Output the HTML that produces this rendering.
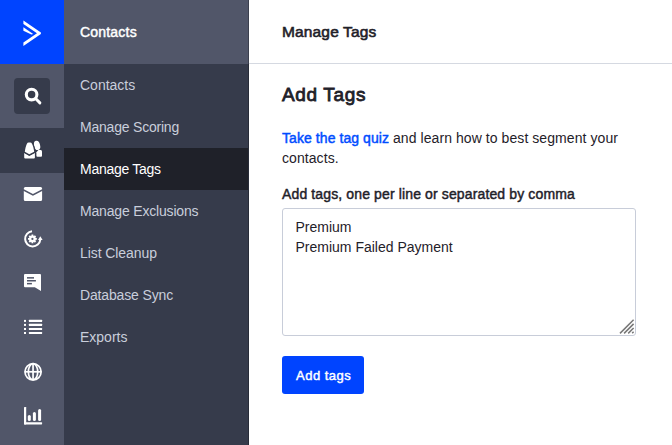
<!DOCTYPE html>
<html><head><meta charset="utf-8">
<style>
*{box-sizing:border-box;margin:0;padding:0}
html,body{width:672px;height:445px;overflow:hidden;background:#fff;font-family:"Liberation Sans",sans-serif}
.abs{position:absolute}
#rail{left:0;top:0;width:64px;height:445px;background:#515669}
#logo{left:0;top:0;width:64px;height:64px;background:#0044ff}
#search{left:14px;top:78px;width:36px;height:36px;background:#363b4b;border-radius:4px}
#railact{left:0;top:128px;width:64px;height:45px;background:#363b4b}
#sub{left:64px;top:0;width:185px;height:445px;background:#363b4b}
#subhead{left:64px;top:0;width:185px;height:64px;background:#515669}
#subedge{left:248px;top:0;width:1px;height:445px;background:rgba(0,0,0,0.25);z-index:5}
#subact{left:64px;top:148px;width:184px;height:42px;background:#1f2129}
.subt{position:absolute;left:80px;font-size:14px;color:#c9cedb;white-space:nowrap;line-height:16px}
#subtitle{left:80px;top:24px;font-size:14px;letter-spacing:0.2px;-webkit-text-stroke:0.45px #fff;color:#fff;white-space:nowrap;line-height:16px}
#mainhead{left:249px;top:0;width:423px;height:64px;border-bottom:1px solid #d5d9e1}
.dark{color:#1f2129}
svg{position:absolute;overflow:visible}
</style></head><body>
<div id="rail" class="abs"></div>
<div id="logo" class="abs"></div>
<svg style="left:0;top:0" width="64" height="64" viewBox="0 0 64 64">
  <polygon fill="#fff" points="23.4,20.4 40.9,32.5 40.9,34 23.4,45.9 23.4,42.5 37,33.25 23.4,24"/>
  <polygon fill="#fff" points="23.4,27.2 33.2,33.9 31.4,34.4 23.4,30.8"/>
</svg>
<div id="search" class="abs"></div>
<svg style="left:0;top:64px" width="64" height="64" viewBox="0 64 64 64">
  <circle cx="31.6" cy="94.6" r="5.3" fill="none" stroke="#fff" stroke-width="3.1"/>
  <line x1="35.8" y1="98.8" x2="39.9" y2="102.9" stroke="#fff" stroke-width="2.9" stroke-linecap="round"/>
</svg>
<div id="railact" class="abs"></div>
<!-- people -->
<svg style="left:0;top:128px" width="64" height="44" viewBox="0 128 64 44">
  <path fill="#fff" d="M36.4,152.2 L38.4,149.9 L40.8,149.9 Q42,150.2 42,151.5 L42,155.8 Q42,156.8 41,156.8 L37.4,156.8 Q36.4,156.8 36.4,155.8 Z"/>
  <ellipse cx="37.1" cy="145.4" rx="3" ry="4.7" transform="rotate(-14 37.1 145.4)" fill="#fff"/>
  <path fill="#fff" d="M24.2,153 L29.3,155.9 L34.9,153 L34.9,157.6 Q34.9,158.6 33.9,158.6 L25.2,158.6 Q24.2,158.6 24.2,157.6 Z"/>
  <path fill="#fff" stroke="#363b4b" stroke-width="2.4" paint-order="stroke" stroke-linejoin="round" d="M24.8,151.7 C25.2,148.5 26,145.5 26.8,143.9 Q27.4,142.6 28.8,142.6 L30.1,142.6 Q31.5,142.6 32.1,143.9 C33,145.5 33.8,148.5 34.2,151.7 L29.3,154.3 Z"/>
</svg>
<!-- mail -->
<svg style="left:0;top:172px" width="64" height="44" viewBox="0 172 64 44">
  <path fill="#fff" d="M25.3,187.1 L40.6,187.1 Q42.1,187.1 42.1,188.6 L42.1,189.3 L32.95,194 L23.8,189.3 L23.8,188.6 Q23.8,187.1 25.3,187.1 Z"/>
  <path fill="#fff" d="M23.8,191 L32.95,195.8 L42.1,191 L42.1,199.6 Q42.1,201.1 40.6,201.1 L25.3,201.1 Q23.8,201.1 23.8,199.6 Z"/>
</svg>
<!-- gear refresh -->
<svg style="left:0;top:216px" width="64" height="44" viewBox="0 216 64 44">
  <path fill="none" stroke="#fff" stroke-width="2" d="M32,231.3 A7.6,7.6 0 1 0 40.3,239.6"/>
  <polygon fill="#fff" points="38,239.9 42.6,239.9 40.3,236.3"/>
  <g transform="translate(32.4 238.9)" fill="#fff">
    <circle r="3.3"/>
    <rect x="-0.9" y="-4.4" width="1.8" height="8.8"/>
    <rect x="-0.9" y="-4.4" width="1.8" height="8.8" transform="rotate(45)"/>
    <rect x="-0.9" y="-4.4" width="1.8" height="8.8" transform="rotate(90)"/>
    <rect x="-0.9" y="-4.4" width="1.8" height="8.8" transform="rotate(135)"/>
  </g>
  <circle cx="32.4" cy="238.9" r="1.1" fill="#515669"/>
</svg>
<!-- chat -->
<svg style="left:0;top:260px" width="64" height="44" viewBox="0 260 64 44">
  <path fill="#fff" d="M25,274 L40,274 Q41,274 41,275 L41,291 L34.8,287.3 L25,287.3 Q24,287.3 24,286.3 L24,275 Q24,274 25,274 Z"/>
  <rect x="27" y="277.1" width="7" height="1.5" fill="#515669"/>
  <rect x="27" y="280" width="8.9" height="1.5" fill="#515669"/>
  <rect x="27" y="282.9" width="4.9" height="1.5" fill="#515669"/>
</svg>
<!-- list -->
<svg style="left:0;top:304px" width="64" height="44" viewBox="0 304 64 44">
  <g fill="#fff">
  <rect x="24" y="319.9" width="2" height="2"/><rect x="28.9" y="319.8" width="13.2" height="2.2" rx="0.5"/>
  <rect x="24" y="323.9" width="2" height="2"/><rect x="28.9" y="323.8" width="13.2" height="2.2" rx="0.5"/>
  <rect x="24" y="328" width="2" height="2"/><rect x="28.9" y="327.9" width="13.2" height="2.2" rx="0.5"/>
  <rect x="24" y="332" width="2" height="2"/><rect x="28.9" y="331.9" width="13.2" height="2.2" rx="0.5"/>
  </g>
</svg>
<!-- globe -->
<svg style="left:0;top:348px" width="64" height="44" viewBox="0 348 64 44">
  <g fill="none" stroke="#fff" stroke-width="1.7">
  <circle cx="33.05" cy="371.8" r="8.1"/>
  <ellipse cx="33.05" cy="371.8" rx="4.7" ry="8.1"/>
  <line x1="33.05" y1="363.7" x2="33.05" y2="379.9"/>
  <line x1="24.9" y1="371.8" x2="41.2" y2="371.8"/>
  </g>
</svg>
<!-- chart -->
<svg style="left:0;top:392px" width="64" height="44" viewBox="0 392 64 44">
  <g fill="#fff">
  <rect x="24" y="406.9" width="2.2" height="17.5" rx="0.6"/>
  <rect x="24" y="422.2" width="18.1" height="2.2" rx="0.6"/>
  <rect x="27.8" y="414.9" width="3" height="6.2" rx="1.5"/>
  <rect x="32.9" y="412" width="3" height="9.1" rx="1.5"/>
  <rect x="38.1" y="409" width="3" height="12.1" rx="1.5"/>
  </g>
</svg>

<div id="sub" class="abs"></div>
<div id="subhead" class="abs"></div>
<div id="subedge" class="abs"></div>
<div id="subact" class="abs"></div>
<div id="subtitle" class="abs">Contacts</div>
<div class="subt" style="top:77px">Contacts</div>
<div class="subt" style="top:119px;letter-spacing:-0.21px">Manage Scoring</div>
<div class="subt" style="top:161px;color:#fff;letter-spacing:-0.27px">Manage Tags</div>
<div class="subt" style="top:203px;letter-spacing:-0.18px">Manage Exclusions</div>
<div class="subt" style="top:245px;letter-spacing:-0.08px">List Cleanup</div>
<div class="subt" style="top:287px;letter-spacing:-0.15px">Database Sync</div>
<div class="subt" style="top:329px">Exports</div>

<div id="mainhead" class="abs"></div>
<div class="abs dark" style="left:282px;top:24px;font-size:15.5px;letter-spacing:0.15px;-webkit-text-stroke:0.6px #1f2129;line-height:16px;white-space:nowrap">Manage Tags</div>
<div class="abs dark" style="left:282px;top:85px;font-size:19px;letter-spacing:0.65px;-webkit-text-stroke:0.8px #1f2129;line-height:20px;white-space:nowrap">Add Tags</div>
<div class="abs dark" style="left:282px;top:128px;font-size:14px;line-height:20px;width:360px;letter-spacing:0.07px">
  <div style="white-space:nowrap"><span style="color:#004cff;-webkit-text-stroke:0.45px #004cff">Take the tag quiz</span> and learn how to best segment your</div>
  <div>contacts.</div>
</div>
<div class="abs dark" style="left:282px;top:186px;font-size:14px;letter-spacing:0.13px;-webkit-text-stroke:0.45px #1f2129;line-height:16px;white-space:nowrap">Add tags, one per line or separated by comma</div>
<div class="abs" style="left:282px;top:208px;width:354px;height:128px;border:1px solid #c8cdd9;border-radius:3px"></div>
<div class="abs dark" style="left:295.5px;top:217px;font-size:14px;line-height:20px;white-space:nowrap">Premium<br>Premium Failed Payment</div>
<svg style="left:600px;top:300px" width="50" height="50" viewBox="600 300 50 50">
  <g stroke="#777" stroke-width="1.5">
  <line x1="620" y1="333.4" x2="633.6" y2="319.8"/>
  <line x1="624.1" y1="333.4" x2="633.6" y2="323.9"/>
  <line x1="628.2" y1="333.4" x2="633.6" y2="328"/>
  <line x1="632.2" y1="333.1" x2="633.6" y2="331.7"/>
  </g>
</svg>
<div class="abs" style="left:282px;top:356px;width:82px;height:38px;background:#0044ff;border-radius:3px"></div>
<div class="abs" style="left:296px;top:367.5px;font-size:13px;letter-spacing:0.5px;-webkit-text-stroke:0.45px #fff;line-height:16px;color:#fff;white-space:nowrap">Add tags</div>
</body></html>
